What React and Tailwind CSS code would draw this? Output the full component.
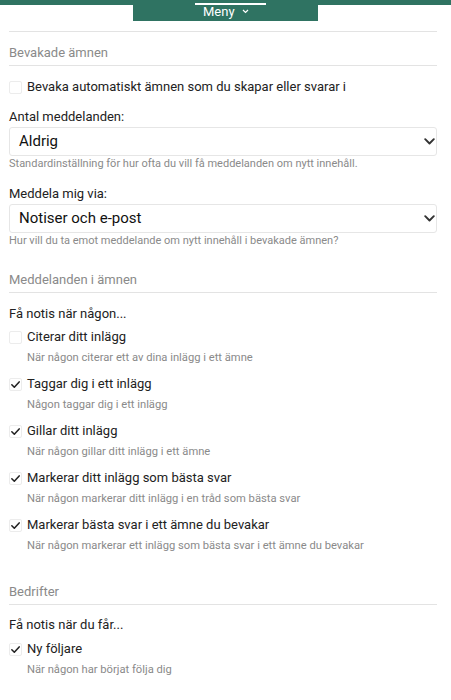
import React from "react";

const green = "bg-[#2f7362]";

const Check = ({ checked }) => (
  <span className="flex h-[13px] w-[13px] shrink-0 items-center justify-center rounded-[2px] border border-[#ececec] bg-white">
    {checked && (
      <svg width="11" height="11" viewBox="0 0 12 12" fill="none">
        <path d="M2 6.3 4.7 9 10 3.2" stroke="#222" strokeWidth="1.7" strokeLinecap="round" strokeLinejoin="round" />
      </svg>
    )}
  </span>
);

const SectionTitle = ({ children }) => (
  <div className="border-b border-[#e3e3e3] pb-[3px] text-[13px] leading-[18px] text-[#8a8a8a]">{children}</div>
);

const Select = ({ value }) => (
  <div className="mt-[1px] flex h-[29px] items-center justify-between rounded-[3px] border border-[#e6e6e6] bg-white pl-[9px] pr-[1px]">
    <span className="text-[15px] text-[#111]">{value}</span>
    <svg width="11" height="7" viewBox="0 0 11 7" fill="none">
      <path d="M1.2 1.2 5.5 5.5 9.8 1.2" stroke="#333" strokeWidth="1.9" strokeLinecap="round" strokeLinejoin="round" />
    </svg>
  </div>
);

const Option = ({ checked, title, desc }) => (
  <div className="mb-[10px]">
    <div className="flex h-[18px] items-center gap-[5px]">
      <Check checked={checked} />
      <span className="text-[13px] text-[#222]">{title}</span>
    </div>
    <div className="mt-[4px] pl-[18px] text-[11.2px] leading-[15px] text-[#8a8a8a]">{desc}</div>
  </div>
);

const topics = [
  { checked: false, title: "Citerar ditt inlägg", desc: "När någon citerar ett av dina inlägg i ett ämne" },
  { checked: true, title: "Taggar dig i ett inlägg", desc: "Någon taggar dig i ett inlägg" },
  { checked: true, title: "Gillar ditt inlägg", desc: "När någon gillar ditt inlägg i ett ämne" },
  { checked: true, title: "Markerar ditt inlägg som bästa svar", desc: "När någon markerar ditt inlägg i en tråd som bästa svar" },
  { checked: true, title: "Markerar bästa svar i ett ämne du bevakar", desc: "När någon markerar ett inlägg som bästa svar i ett ämne du bevakar" },
];

export default function App() {
  return (
    <div className="h-[700px] overflow-hidden bg-white font-['Roboto',sans-serif] text-[#222]">
      {/* header */}
      <div className="flex bg-[linear-gradient(to_bottom,#2f7362_5px,transparent_5px)]">
        <div className={`ml-[133px] flex h-[21px] w-[185px] flex-col ${green}`}>
          <div className="mt-[3px] ml-[62px] h-[2px] w-[71px] bg-white" />
          <div className="ml-[70px] -mt-[1px] flex items-center gap-[7px] text-[13px] leading-[15px] text-white">
            Meny
            <svg width="7" height="5" viewBox="0 0 7 5" fill="none">
              <path d="M1 1 3.5 3.5 6 1" stroke="#fff" strokeWidth="1.2" />
            </svg>
          </div>
        </div>
      </div>

      <div className="ml-[9px] mr-[14px]">
        <div className="mt-[10px] border-t border-[#e3e3e3]" />

        <div className="mt-[12px]">
          <SectionTitle>Bevakade ämnen</SectionTitle>
        </div>

        <div className="mt-[12px] flex h-[18px] items-center gap-[5px]">
          <Check checked={false} />
          <span className="text-[13px]">Bevaka automatiskt ämnen som du skapar eller svarar i</span>
        </div>

        <div className="mt-[12px] text-[13px] leading-[18px] text-[#222]">Antal meddelanden:</div>
        <Select value="Aldrig" />
        <div className="text-[11px] leading-[15px] text-[#8a8a8a]">
          Standardinställning för hur ofta du vill få meddelanden om nytt innehåll.
        </div>

        <div className="mt-[14px] text-[13px] leading-[18px] text-[#222]">Meddela mig via:</div>
        <Select value="Notiser och e-post" />
        <div className="text-[11px] leading-[15px] text-[#8a8a8a]">
          Hur vill du ta emot meddelande om nytt innehåll i bevakade ämnen?
        </div>

        <div className="mt-[23px]">
          <SectionTitle>Meddelanden i ämnen</SectionTitle>
        </div>

        <div className="mt-[12px] mb-[5px] text-[13px] leading-[18px]">Få notis när någon...</div>
        {topics.map((t, i) => (
          <Option key={i} {...t} />
        ))}

        <div className="mt-[30px]">
          <SectionTitle>Bedrifter</SectionTitle>
        </div>

        <div className="mt-[11px] mb-[6px] text-[13px] leading-[18px]">Få notis när du får...</div>
        <Option checked title="Ny följare" desc="När någon har börjat följa dig" />
      </div>
    </div>
  );
}
